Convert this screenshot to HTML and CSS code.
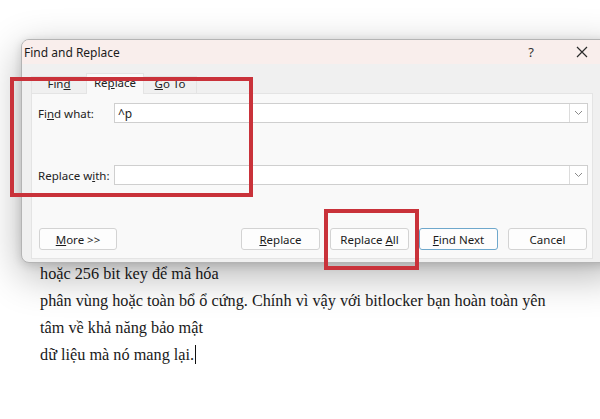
FILE: index.html
```html
<!DOCTYPE html>
<html lang="vi">
<head>
<meta charset="utf-8">
<title>Find and Replace</title>
<link rel="stylesheet" href="styles.css">
</head>
<body>
  <div class="doc">
    <p>hoặc 256 bit key để mã hóa</p>
    <p>phân vùng hoặc toàn bổ ổ cứng. Chính vì vậy với bitlocker bạn hoàn toàn yên</p>
    <p>tâm về khả năng bảo mật</p>
    <p>dữ liệu mà nó mang lại.<span class="caret"></span></p>
  </div>

  <div class="dialog">
    <div class="titlebar">
      <span class="title">Find and Replace</span>
      <span class="help">?</span>
      <svg class="close" width="12" height="12" viewBox="0 0 12 12">
        <path d="M1 1L11 11M11 1L1 11" stroke="#2b2b2b" stroke-width="1.2" fill="none"/>
      </svg>
    </div>

    <div class="tabs">
      <span class="tab tab-find">Fin<u>d</u></span>
      <span class="tab tab-active">Re<u>p</u>lace</span>
      <span class="tab tab-goto"><u>G</u>o To</span>
    </div>

    <div class="panel">
      <div class="field">
        <label class="label">Fi<u>n</u>d what:</label>
        <div class="combo">
          <span class="combo-text">^p</span>
          <span class="combo-arrow">
            <svg width="9" height="6" viewBox="0 0 9 6"><path d="M1 1L4.5 4.5L8 1" stroke="#8a8a8a" stroke-width="1" fill="none"/></svg>
          </span>
        </div>
      </div>
      <div class="field field-replace">
        <label class="label">Replace w<u>i</u>th:</label>
        <div class="combo">
          <span class="combo-text"></span>
          <span class="combo-arrow">
            <svg width="9" height="6" viewBox="0 0 9 6"><path d="M1 1L4.5 4.5L8 1" stroke="#8a8a8a" stroke-width="1" fill="none"/></svg>
          </span>
        </div>
      </div>
      <div class="buttons">
        <button class="btn btn-more"><u>M</u>ore &gt;&gt;</button>
        <div class="btn-group">
          <button class="btn"><u>R</u>eplace</button>
          <button class="btn">Replace <u>A</u>ll</button>
          <button class="btn btn-default"><u>F</u>ind Next</button>
          <button class="btn">Cancel</button>
        </div>
      </div>
    </div>
  </div>

  <div class="mark mark-fields"></div>
  <div class="mark mark-replace-all"></div>
</body>
</html>
```

FILE: styles.css
```css
html, body {
  margin: 0;
  padding: 0;
}

body {
  width: 600px;
  height: 419px;
  overflow: hidden;
  position: relative;
  background: #ffffff;
}

/* Document text behind the dialog */
.doc {
  padding: 261px 0 0 40px;
  font-family: "Liberation Serif", "Times New Roman", serif;
  font-size: 16.25px;
  line-height: 27px;
  color: #1a1a1a;
}

.doc p {
  margin: 0;
}

.caret {
  display: inline-block;
  width: 1px;
  height: 19px;
  background: #111;
  vertical-align: -4px;
  margin-left: 1px;
}

/* Dialog window */
.dialog {
  position: absolute;
  left: 21px;
  top: 39px;
  width: 600px;
  height: 224px;
  box-sizing: border-box;
  background: #f0f0f0;
  border: 1px solid #b4b4b4;
  border-radius: 8px;
  box-shadow: 0 12px 40px rgba(0, 0, 0, 0.3), 0 2px 10px rgba(0, 0, 0, 0.14);
  font-family: "Noto Sans", "Open Sans", sans-serif;
  color: #1b1b1b;
  overflow: hidden;
}

.titlebar {
  height: 24px;
  background: #f9eeec;
  display: flex;
  align-items: center;
  padding-left: 2px;
}

.title {
  font-size: 12px;
  flex: 1;
}

.help {
  font-size: 13px;
  color: #333;
  margin-right: 42px;
}

.close {
  margin-right: 32px;
}

/* Tab strip */
.tabs {
  display: flex;
  align-items: flex-end;
  height: 20px;
  margin-top: 9px;
  padding-left: 9px;
  font-size: 11.5px;
}

.tab {
  box-sizing: border-box;
  height: 17px;
  padding-bottom: 3px;
  display: flex;
  align-items: center;
  justify-content: center;
  color: #222;
  border: 1px solid #e4e4e4;
  border-bottom: none;
}

.tab-find {
  width: 55px;
  border-right: none;
}

.tab-active {
  width: 58px;
  height: 21px;
  padding-bottom: 4px;
  background: #f9f9f9;
  margin-bottom: -1px;
  position: relative;
}

.tab-goto {
  width: 53px;
  border-left: none;
}

/* Tab page */
.panel {
  margin-left: 9px;
  width: 562px;
  height: 166px;
  box-sizing: border-box;
  background: #f9f9f9;
  border: 1px solid #e4e4e4;
  padding: 9px 4px 0 6px;
  display: flex;
  flex-direction: column;
}

.field {
  display: flex;
  align-items: center;
  height: 20px;
}

.field-replace {
  margin-top: 42px;
}

.label {
  width: 76px;
  font-size: 11.5px;
  color: #222;
}

.combo {
  flex: 1;
  height: 20px;
  box-sizing: border-box;
  background: #ffffff;
  border: 1px solid #cfcfcf;
  display: flex;
  align-items: center;
}

.combo-text {
  flex: 1;
  padding-left: 3px;
  font-size: 12px;
  color: #222;
}

.combo-arrow {
  width: 17px;
  height: 18px;
  border-left: 1px solid #dcdcdc;
  display: flex;
  align-items: center;
  justify-content: center;
}

.buttons {
  display: flex;
  margin-top: 43px;
}

.btn-group {
  display: flex;
  gap: 10px;
  margin-left: auto;
  margin-right: 1px;
}

.btn {
  width: 79px;
  height: 22px;
  box-sizing: border-box;
  padding: 0;
  background: #fdfdfd;
  border: 1px solid #d3d3d3;
  border-radius: 3px;
  font-family: "Noto Sans", "Open Sans", sans-serif;
  font-size: 11.5px;
  color: #1b1b1b;
}

.btn-more {
  width: 78px;
  margin-left: 1px;
}

.btn-default {
  border-color: #6fa8cc;
}

/* Red annotation frames */
.mark {
  position: absolute;
  box-sizing: border-box;
  border: 4px solid #c9323a;
}

.mark-fields {
  left: 10px;
  top: 77px;
  width: 243px;
  height: 120px;
}

.mark-replace-all {
  left: 324px;
  top: 209px;
  width: 95px;
  height: 61px;
}
```
